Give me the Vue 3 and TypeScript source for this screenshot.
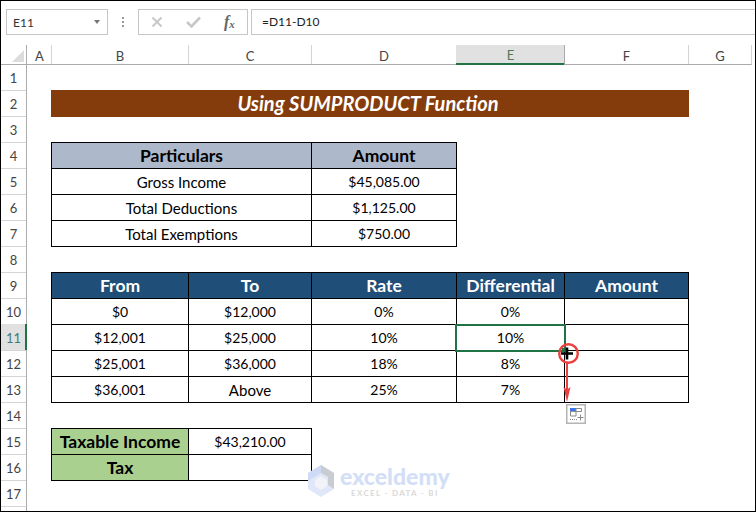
<script setup lang="ts">
interface Cell { r: number; c: number; t: string; k?: string; span?: number }
const cols = ['A', 'B', 'C', 'D', 'E', 'F', 'G']
const rows = Array.from({ length: 18 }, (_, i) => i + 1)
const cells: Cell[] = []
const isNum = (t: string) => /^[$\d]/.test(t)
const add = (r: number, c: number, vals: string[], k = '') => vals.forEach((t, i) => cells.push({ r, c: c + i, t, k: k || (isNum(t) ? 'num' : '') }))
const addPair = (r: number, a: string, b: string, k = '') => {
  cells.push({ r, c: 3, span: 2, t: a, k }, { r, c: 5, t: b, k: k || 'num' })
}
addPair(4, 'Particulars', 'Amount', 'grey')
addPair(5, 'Gross Income', '$45,085.00')
addPair(6, 'Total Deductions', '$1,125.00')
addPair(7, 'Total Exemptions', '$750.00')
add(9, 3, ['From', 'To', 'Rate', 'Differential', 'Amount'], 'blue')
add(10, 3, ['$0', '$12,000', '0%', '0%', ''])
add(11, 3, ['$12,001', '$25,000', '10%', '10%', ''])
add(12, 3, ['$25,001', '$36,000', '18%', '8%', ''])
add(13, 3, ['$36,001', 'Above', '25%', '7%', ''])
cells.push({ r: 15, c: 3, t: 'Taxable Income', k: 'green' }, { r: 15, c: 4, t: '$43,210.00', k: 'num' })
cells.push({ r: 16, c: 3, t: 'Tax', k: 'green' }, { r: 16, c: 4, t: '' })
</script>

<template>
  <div class="app">
    <div class="bar">
      <div class="namebox"><span>E11</span><i class="caret"></i></div>
      <div class="dots"><b></b><b></b><b></b></div>
      <div class="btns">
        <svg width="12" height="12" viewBox="0 0 12 12"><path d="M1.500 1.500l9 9M10.500 1.500l-9 9" stroke="#c8c8c8" stroke-width="2" fill="none"/></svg>
        <svg width="15" height="12" viewBox="0 0 15 12"><path d="M1 6l4.500 4.500L14 1.500" stroke="#c8c8c8" stroke-width="2.600" fill="none"/></svg>
        <span class="fx">f<sub>x</sub></span>
      </div>
      <div class="formula">=D11-D10</div>
    </div>
    <div class="sheet">
      <div class="corner"><i></i></div>
      <div v-for="(c, i) in cols" :key="c" class="ch" :class="{ sel: c === 'E' }" :style="{ gridColumn: i + 2 }">{{ c }}</div>
      <template v-for="r in rows" :key="r">
        <div class="rh" :class="{ sel: r === 11 }" :style="{ gridRow: r + 1 }">{{ r < 18 ? r : '' }}</div>
      </template>
      <div class="title">Using SUMPRODUCT Function</div>
      <div v-for="(x, i) in cells" :key="i" class="cell" :class="x.k" :style="{ gridRow: x.r + 1, gridColumn: `${x.c} / span ${x.span ?? 1}` }">{{ x.t }}</div>
      <div class="active"></div>
    </div>

    <svg class="cursor" width="26" height="64" viewBox="0 0 26 64">
      <circle cx="12.500" cy="12.500" r="9.300" fill="none" stroke="#e8413f" stroke-width="2.400"/>
      <path d="M11 22V50" stroke="#e8413f" stroke-width="2"/>
      <path d="M7.500 46L11 61 14.500 46 11 48.500z" fill="#e8413f"/>
      <path d="M11 6.500v12M5 12.500h12" stroke="#000" stroke-width="2.600"/>
    </svg>
    <svg class="smart" width="20" height="20" viewBox="0 0 20 20">
      <rect x=".75" y=".75" width="18.500" height="18.500" fill="#fff" stroke="#b4b4b4" stroke-width="1.500"/>
      <rect x="4" y="4" width="6" height="3.500" fill="#3b78e7"/>
      <path d="M10 4.500h5.500v3H10zM4.500 7.500H10V12H4.500z" fill="none" stroke="#8a8a8a"/>
      <path d="M4 15.500h7" stroke="#8a8a8a" stroke-dasharray="1 1"/>
      <path d="M14.500 10.500v6M11.500 13.500h6" stroke="#8a8a8a"/>
    </svg>
    <div class="mark">
      <svg width="28" height="32" viewBox="0 0 28 32">
        <path d="M14 0L27 8v16L14 32 1 24V8z" fill="#e0e7f8"/>
        <path d="M14 0L27 8v16L21 20V12L14 8z" fill="#c8ccd3"/>
        <path d="M14 0L1 8v8L14 8z" fill="#cfdbf6"/>
        <path d="M8 15l6-4 6 4v6l-6 4-6-4z" fill="#f1f3f8"/>
      </svg>
      <div class="mtext">
        <div class="m1">exceldemy</div>
        <div class="m2">EXCEL - DATA - BI</div>
      </div>
    </div>
  </div>
</template>

<style>
html, body { margin: 0; background: #fff; }
</style>

<style scoped>
.app { position: relative; width: 756px; height: 512px; box-sizing: border-box; overflow: hidden; border: 1px solid #000; font-family: Lato, "Liberation Sans", sans-serif; color: #000; background: #fff; }
.bar { height: 44px; box-sizing: border-box; padding: 8px 0 0 5px; display: flex; align-items: flex-start; background: #fff; }
.namebox { width: 102px; height: 26px; box-sizing: border-box; border: 1px solid #c6c6c6; display: flex; align-items: center; justify-content: space-between; padding: 0 7px 0 6px; font-size: 12px; color: #333; }
.caret { width: 0; height: 0; border-left: 3.500px solid transparent; border-right: 3.500px solid transparent; border-top: 4px solid #777; }
.dots { width: 30px; height: 26px; display: flex; flex-direction: column; align-items: center; justify-content: center; gap: 2px; }
.dots b { width: 2px; height: 2px; background: #999; }
.btns { width: 110px; height: 26px; box-sizing: border-box; border: 1px solid #c6c6c6; display: flex; align-items: center; padding-left: 12px; gap: 23px; }
.fx { font-family: "Liberation Serif", serif; font-style: italic; font-weight: 700; font-size: 16px; color: #666; margin-left: 0; line-height: 1; }
.fx sub { font-size: 11px; vertical-align: -1px; }
.formula { flex: 1; height: 26px; box-sizing: border-box; margin-left: 3px; border: 1px solid #c6c6c6; border-right: 0; padding-left: 10px; font-size: 12px; line-height: 24px; color: #222; }
.sheet { display: grid; grid-template-columns: 26px 24px 137px 123px 145px 108px 124px 63px 1fr; grid-template-rows: 19px repeat(18, 26px); }
.corner { grid-row: 1; grid-column: 1; border-right: 1px solid #ababab; border-bottom: 1px solid #ababab; margin-bottom: -1px; box-sizing: border-box; position: relative; }
.corner i { position: absolute; right: 2px; bottom: 2px; width: 0; height: 0; border-left: 12px solid transparent; border-bottom: 12px solid #dcdcdc; }
.ch { grid-row: 1; display: flex; align-items: center; justify-content: center; box-sizing: border-box; border-right: 1px solid #d5d5d5; border-bottom: 1px solid #ababab; margin: 0 -1px -1px 0; font-size: 13px; color: #444; padding: 2px 0 0 1px; }
.ch.sel { background: #e1e1e1; border-bottom: 2px solid #217346; border-right-color: #ababab; color: #4f7a55; }
.rh { grid-column: 1; display: flex; align-items: center; justify-content: center; box-sizing: border-box; border-right: 1px solid #ababab; border-bottom: 1px solid #d5d5d5; margin-bottom: -1px; font-size: 13px; color: #444; padding-top: 2px; }
.rh.sel { background: #e1e1e1; border-right-color: #217346; box-shadow: inset -1px 0 #217346; color: #3f7a70; }
.title { grid-row: 3; grid-column: 3 / 8; background: #843c0c; color: #fff; font-size: 20px; font-weight: 700; font-style: italic; text-align: center; line-height: 27px; height: 27px; margin-right: -1px; padding-right: 4px; }
.cell { box-sizing: border-box; border: 1px solid #000; margin: 0 -1px -1px 0; display: flex; align-items: center; justify-content: center; font-size: 15px; background: #fff; }
.cell.num { font-size: 14px; }
.cell.grey { background: #adb9ca; font-weight: 700; font-size: 17.500px; }
.cell.blue { background: #1f4e78; color: #fff; font-weight: 700; font-size: 17.500px; }
.cell.green { background: #a9d08e; font-weight: 700; font-size: 17.500px; }
.active { grid-row: 12; grid-column: 6; border: 2px solid #217346; margin: 0 -2px -2px -1px; z-index: 1; position: relative; }
.active::after { content: ""; position: absolute; right: -2px; bottom: -2px; width: 4px; height: 4px; background: #217346; }
.cursor { position: absolute; left: 555px; top: 340px; z-index: 3; }
.smart { position: absolute; left: 565px; top: 403px; z-index: 3; }
.mark { position: absolute; left: 306px; top: 464px; display: flex; gap: 5px; z-index: 2; }
.m1 { font-size: 23px; font-weight: 900; color: #d3def7; line-height: 22px; }
.m2 { font-size: 8px; font-weight: 700; color: #d9d9d9; letter-spacing: 1.300px; text-align: center; line-height: 10px; margin-top: 1px; white-space: nowrap; }
</style>
